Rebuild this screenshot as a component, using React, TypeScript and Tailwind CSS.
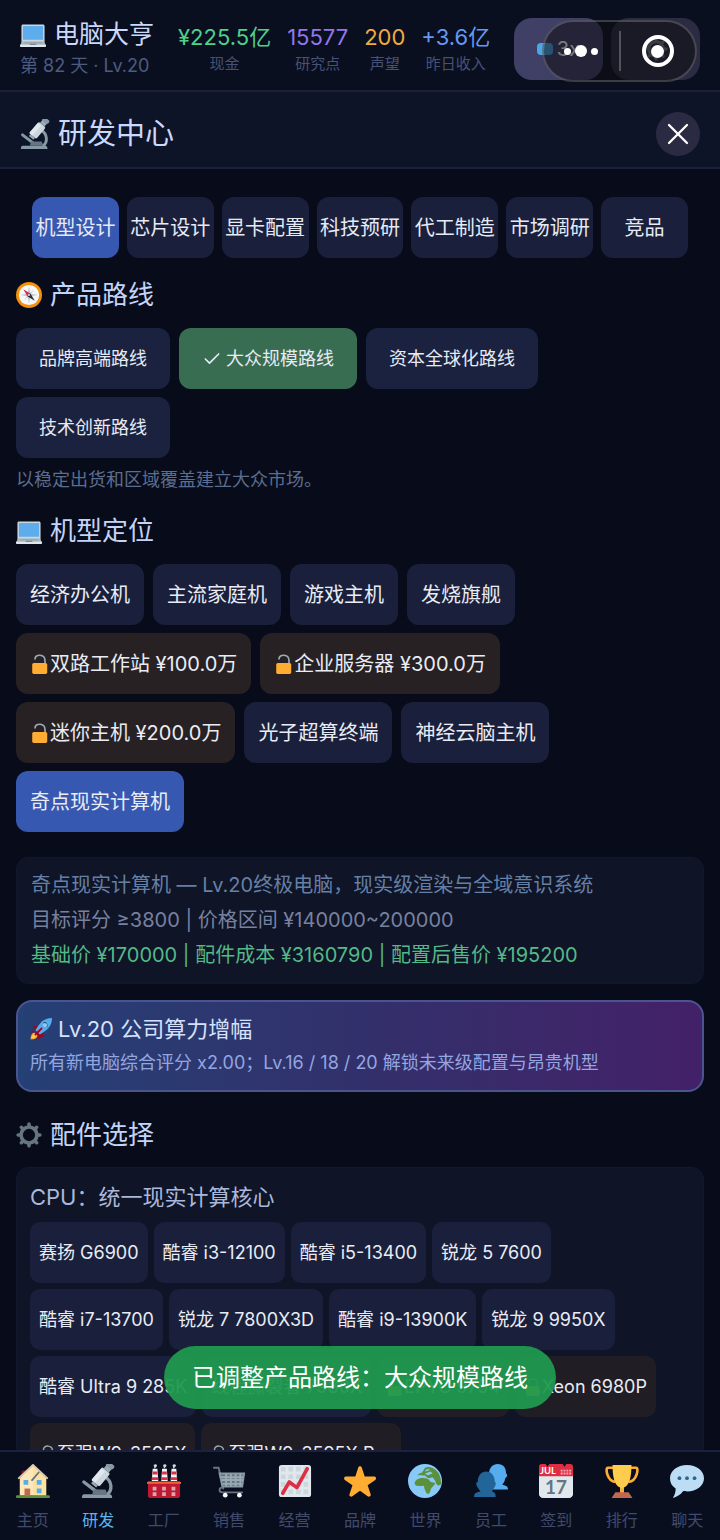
import type { ReactNode } from 'react';
import clsx from 'clsx';
import { Check, X } from 'lucide-react';

function Emoji({ className, children }: { className: string; children: ReactNode }) {
  return (
    <svg viewBox="0 0 36 36" className={clsx('shrink-0', className)} aria-hidden="true">
      {children}
    </svg>
  );
}

const laptop = (
  <>
    <path fill="#CCD6DD" d="M34 29c0 1-1 2-2 2H4c-1 0-2-1-2-2V7c0-1 1-2 2-2h28c1 0 2 1 2 2z" />
    <path fill="#5DADEC" d="M4 7h28v19H4z" />
    <path fill="#AEBBC1" d="M3 28h30l3 6H0z" />
    <path fill="#9AAAB4" d="M6 29h24l1 2H5z" />
    <path fill="#E1E8ED" d="M0 33h36v1.500c0 .8-.7 1.500-1.500 1.500h-33C.7 36 0 35.300 0 34.500z" />
    <path fill="#657786" d="M14 31.500h8l1 1.500H13z" />
  </>
);

const microscope = (
  <>
    <path d="M25 13c8 5 9 15 2 20" fill="none" stroke="#8899A6" strokeWidth="3.500" />
    <path fill="#8899A6" d="M3 32h27c2 0 3 1 3 4H1c0-3 1-4 2-4z" />
    <path stroke="#8899A6" strokeWidth="3.500" strokeLinecap="round" d="m3 19 13 10" />
    <path fill="#66757F" d="M13 27h13l2 5H12z" />
    <g transform="rotate(40 20 14)">
      <rect x="15" y="4" width="11" height="18" rx="2" fill="#CCD6DD" />
      <path fill="#E1E8ED" d="M15 6h5v16h-5z" />
      <path fill="#99AAB5" d="M17-1h7v5h-7zM17 22h7v3h-7z" />
      <rect x="16" y="-5" width="9" height="5" rx="2" fill="#8899A6" />
    </g>
  </>
);

const compass = (
  <>
    <circle cx="18" cy="18" r="18" fill="#F4900C" />
    <circle cx="18" cy="18" r="14" fill="#F5F8FA" />
    <path fill="#CCD6DD" d="m25 10-4.500 7.500L11 26l4.500-7.500z" />
    <path fill="#99AAB5" d="m18 6 1 9h-2zM18 30l1-9h-2zM6 18l9-1v2zM30 18l-9-1v2z" />
    <path fill="#DD2E44" d="m10 10 10 6-4 4z" />
    <path fill="#292F33" d="m26 26-10-6 4-4z" />
    <circle cx="18" cy="18" r="1.500" fill="#CCD6DD" />
  </>
);

const gear = (
  <g fill="none" stroke="#66757F">
    <circle cx="18" cy="18" r="11" strokeWidth="5" />
    <path
      strokeWidth="5"
      strokeLinecap="round"
      d="M18 5V3M18 31v2M5 18H3M31 18h2M8.800 8.800 7.400 7.400M27.200 27.200l1.400 1.400M8.800 27.200l-1.400 1.400M27.200 8.800l1.400-1.400"
    />
  </g>
);

const rocket = (
  <>
    <path fill="#A0041E" d="M8 16 1 24l9-1zM20 28l-7 7-1-9zM7 13h10L8 24 4 20zM23 19v10l-7 4-4-5z" />
    <path fill="#FFAC33" d="M1 35C1 29 3 24 7 24c4 1 5 3 5 5 0 4-5 6-11 6z" />
    <path fill="#FFCC4D" d="M3 33c0-3 1-6 4-6 2 0 2 1 2 2 0 3-3 4-6 4z" />
    <path fill="#55ACEE" d="M36 0C22 0 16 8 9 20l7 7C28 20 36 14 36 0z" />
    <path fill="#292F33" d="M21 8c4-2 9-1 7 8l-2-5z" />
    <circle cx="24.500" cy="11.500" r="3.500" fill="#8CCAF7" />
    <path stroke="#A0041E" strokeWidth="3" strokeLinecap="round" d="m9 27 10-10" />
  </>
);

const openLock = (
  <>
    <path d="M9 9c0-9.500 18-9.500 18 3v6" fill="none" stroke="#99AAB5" strokeWidth="3" strokeLinecap="round" />
    <rect x="4" y="16" width="27" height="20" rx="3" fill="#FFAC33" />
  </>
);

const house = (
  <>
    <path fill="#5C913B" d="M1 33h34c1 0 1.500 3 0 3H1c-1.500 0-1.500-3 0-3z" />
    <path fill="#A0041E" d="M6 7h5v9H6z" />
    <path fill="#FFE8B6" d="M18 1 4 15v18h28V15z" />
    <path fill="#FFD983" d="M18 1v32h14V15z" opacity=".45" />
    <path fill="none" stroke="#DAC8B1" strokeWidth="2" strokeLinecap="round" d="M3 15 18 1l15 14" />
    <path stroke="#66757F" strokeWidth="2" strokeLinecap="round" d="m17 17 7-8" />
    <path fill="#55ACEE" d="M8 17h5v5H8zM22 17h5v5h-5zM22 26h5v5h-5z" />
    <path fill="#C1694F" d="M9 26h6v8H9z" />
  </>
);

const factory = (
  <>
    <path fill="#F5F8FA" d="m6 5 5 0 1 14H5zM16 5h5l1 14h-7zM26 5h5l1 14h-7z" />
    <path fill="#DD2E44" d="M6 8h5v3H6zM5 14h7v3H5zM16 8h5v3h-5zM15 14h7v3h-7zM26 8h5v3h-5zM25 14h7v3h-7z" />
    <path fill="#CCD6DD" d="M7 1c2-2 5 0 3 2L8 5zM17 1c2-2 5 0 3 2l-2 2zM27 1c2-2 5 0 3 2l-2 2z" />
    <path fill="#BE1931" d="M1 18h34v16c0 1-1 2-2 2H3c-1 0-2-1-2-2z" />
    <path fill="#F4623A" d="M0 19h36v2H0z" />
    <path fill="#DDA5AE" d="M6 24h4v4H6zM16 24h4v4h-4zM26 24h4v4h-4zM6 30h4v4H6zM16 30h4v4h-4zM26 30h4v4h-4z" />
  </>
);

const cart = (
  <g fill="none" stroke="#99AAB5" strokeWidth="2" strokeLinecap="round">
    <path stroke="#66757F" d="M2 4h5l5 22" />
    <path fill="#66757F" stroke="#8899A6" d="M8 10h26l-2 14H11z" />
    <path d="M10 14h22M11 17h21M12 21h19M15 11v12M20 11v12M25 11v12M30 11v12" />
    <path stroke="#66757F" d="M11 25c-4 0-4 5 0 5h21" />
    <g fill="#F5F8FA" stroke="none">
      <circle cx="14" cy="33" r="2.500" />
      <circle cx="29" cy="33" r="2.500" />
    </g>
  </g>
);

const chart = (
  <>
    <rect x="1" y="1" width="34" height="34" rx="3" fill="#E1E8ED" />
    <g fill="#CCD6DD">
      <path d="M3 3h5v5H3zM11 3h5v5h-5zM19 3h5v5h-5zM27 3h5v5h-5zM3 11h5v5H3zM11 11h5v5h-5zM19 11h5v5h-5zM27 11h5v5h-5z" />
      <path d="M3 19h5v5H3zM11 19h5v5h-5zM19 19h5v5h-5zM27 19h5v5h-5zM3 27h5v5H3zM11 27h5v5h-5zM19 27h5v5h-5zM27 27h5v5h-5z" />
    </g>
    <path fill="none" stroke="#DD2E44" strokeWidth="3.800" strokeLinecap="round" strokeLinejoin="round" d="m5 31 7-12 8 6L31 5" />
  </>
);

const star = (
  <path
    fill="#FFAC33"
    d="M27.287 34.627c-.404 0-.806-.124-1.152-.371L18 28.422l-8.135 5.834c-.343.247-.745.371-1.147.371-.405 0-.81-.126-1.156-.379-.686-.499-.968-1.386-.708-2.192l3.179-9.535-8.062-5.681c-.683-.501-.962-1.388-.697-2.195.265-.807 1.020-1.355 1.867-1.360l9.947-.018 3.042-9.549c.27-.803 1.024-1.345 1.870-1.345s1.600.542 1.870 1.345l3.115 9.549 10.006.018c.848.005 1.603.553 1.867 1.360.265.807-.014 1.694-.697 2.195l-8.062 5.681 3.179 9.535c.26.806-.022 1.693-.708 2.192-.348.253-.753.379-1.158.379z"
  />
);

const globe = (
  <>
    <circle cx="18" cy="18" r="18" fill="#88C9F9" />
    <g fill="#5C913B">
      <path d="M7 20c1-4 6-6 11-5 3 0 5 2 6 4l5 1c-1 3-4 4-5 7-1 5-3 6-5 3-1-3-2-4-2-7-6 1-10 0-10-3z" />
      <path d="M10 12c1-2 3-2 5-3l3-5c4-2 9 0 12 3 4 4 5 9 5 14-2 3-5 2-6-3l-3-4-4 1c-2 0-3-3-5-3-2 1-3-1-5 0z" />
    </g>
    <path fill="#88C9F9" d="m19 6 4-1-1 2-4 1zM18 10l6-2 2 2-5 2z" />
  </>
);

const people = (
  <>
    <path fill="#55ACEE" d="M17 27c0-3 2-4 5-5-4-3-6-7-6-12 0-6 4-10 9-10 6 0 9 4 9 10 2 1 1 4-1 5 0 3-2 5-3 7 3 1 6 1 6 5z" />
    <path fill="#226699" d="M0 35c0-5 3-5 7-6-2-2-3-4-4-6-1-2-1-4 1-4 0-7 4-11 9-11s9 4 9 11c2 1 1 3 0 5-1 2-2 3-3 5 3 1 4 2 4 6z" />
  </>
);

const calendar = (
  <>
    <path fill="#E1E8ED" d="M0 11h36v21c0 2-2 4-4 4H4c-2 0-4-2-4-4z" />
    <path fill="#DD2E44" d="M3 0h4l2 3 2-3h14l2 3 2-3h4c2 0 3 1 3 3v10H0V3c0-2 1-3 3-3z" />
    <path fill="#F4ABBA" d="M23 6h2v2h-2zM26 6h2v2h-2zM29 6h2v2h-2zM32 6h2v2h-2zM23 9h2v2h-2zM26 9h2v2h-2zM29 9h2v2h-2zM32 9h2v2h-2z" />
    <text x="1" y="11" fontSize="10" fontWeight="700" fill="#fff" fontFamily="Lato, sans-serif">
      JUL
    </text>
    <text x="18" y="32" fontSize="20" fontWeight="700" textAnchor="middle" fill="#66757F" fontFamily="Lato, sans-serif">
      17
    </text>
  </>
);

const trophy = (
  <>
    <path fill="none" stroke="#FFAC33" strokeWidth="2.800" d="M10 4H3c-3 0-1 14 8 15M26 4h7c3 0 1 14-8 15" />
    <path fill="#FFCC4D" d="M8 1h20c0 13-2 21-8 24v6h-4v-6C10 22 8 14 8 1z" />
    <path fill="#FFAC33" d="M16 26h4v5h-4z" />
    <path fill="#C1694F" d="M11 30h14l4 6H7z" />
  </>
);

const bubble = (
  <>
    <path fill="#BDDDF4" d="M18 1c10 0 18 6 18 14s-8 14-18 14c-1 0-3 0-4-.3C11 33 7 35 3 36c2-3 3-6 3-10-4-3-6-6-6-11C0 7 8 1 18 1z" />
    <g fill="#2A6797">
      <circle cx="10" cy="15" r="2" />
      <circle cx="18" cy="15" r="2" />
      <circle cx="26" cy="15" r="2" />
    </g>
  </>
);

const stats = [
  { value: '¥225.5亿', label: '现金', color: 'text-[#4fd08b]' },
  { value: '15577', label: '研究点', color: 'text-[#9277ea]' },
  { value: '200', label: '声望', color: 'text-[#f0ab3f]' },
  { value: '+3.6亿', label: '昨日收入', color: 'text-[#6599f2]' },
];

const tabs = ['机型设计', '芯片设计', '显卡配置', '科技预研', '代工制造', '市场调研', '竞品'];

const routes = ['品牌高端路线', '大众规模路线', '资本全球化路线', '技术创新路线'];

const models = [
  { name: '经济办公机' },
  { name: '主流家庭机' },
  { name: '游戏主机' },
  { name: '发烧旗舰' },
  { name: '双路工作站 ¥100.0万', locked: true },
  { name: '企业服务器 ¥300.0万', locked: true },
  { name: '迷你主机 ¥200.0万', locked: true },
  { name: '光子超算终端' },
  { name: '神经云脑主机' },
  { name: '奇点现实计算机', active: true },
];

const cpus = [
  { name: '赛扬 G6900' },
  { name: '酷睿 i3-12100' },
  { name: '酷睿 i5-13400' },
  { name: '锐龙 5 7600' },
  { name: '酷睿 i7-13700' },
  { name: '锐龙 7 7800X3D' },
  { name: '酷睿 i9-13900K' },
  { name: '锐龙 9 9950X' },
  { name: '酷睿 Ultra 9 285K' },
  { name: '线程撕裂者 7980X' },
  { name: 'EPYC 9754', locked: true },
  { name: 'Xeon 6980P', locked: true },
  { name: '至强W9-3595X', locked: true },
  { name: '至强W9-3595X Pro', locked: true },
];

const navItems = [
  { label: '主页', icon: house },
  { label: '研发', icon: microscope, active: true },
  { label: '工厂', icon: factory },
  { label: '销售', icon: cart },
  { label: '经营', icon: chart },
  { label: '品牌', icon: star },
  { label: '世界', icon: globe },
  { label: '员工', icon: people },
  { label: '签到', icon: calendar },
  { label: '排行', icon: trophy },
  { label: '聊天', icon: bubble },
];

function SectionTitle({ icon, children }: { icon: ReactNode; children: ReactNode }) {
  return (
    <h2 className="flex items-center gap-2 text-[26px] leading-9 text-[#c3d4fb]">
      <Emoji className="size-[26px]">{icon}</Emoji>
      {children}
    </h2>
  );
}

function TopBar() {
  return (
    <header className="flex h-[92px] shrink-0 items-center justify-between border-b-2 border-[#1b2036] bg-[#0a0f20] px-5 pt-2">
      <div className="flex items-center gap-6 whitespace-nowrap">
        <div>
          <h1 className="flex items-center gap-2 text-[25px] leading-[34px] text-[#cbd8fa]">
            <Emoji className="size-[26px]">{laptop}</Emoji>
            电脑大亨
          </h1>
          <p className="text-[18px] leading-[30px] text-[#4e5b80]">第 82 天 · Lv.20</p>
        </div>
        <dl className="flex gap-4 text-center">
          {stats.map((s) => (
            <div key={s.label} className="flex flex-col-reverse">
              <dt className="text-[15px] leading-6 text-[#465275]">{s.label}</dt>
              <dd className={clsx('text-[22px] leading-[30px]', s.color)}>{s.value}</dd>
            </div>
          ))}
        </dl>
      </div>

      <div className="relative flex gap-2">
        <button className="flex h-[62px] w-[89px] items-center justify-center gap-1 rounded-[18px] bg-[#403f66] text-[20px] text-white">
          <span className="h-3 w-4 rounded-sm bg-[#4ba7e4]" />
          3x
        </button>
        <button aria-label="设置" className="flex h-[62px] w-[89px] items-center justify-center rounded-[18px] bg-[#2b2b43]">
          <Emoji className="size-6">{gear}</Emoji>
        </button>
        {/* host app capsule floats over the game's own buttons */}
        <div className="absolute top-[2px] right-[3px] flex h-[62px] w-[155px] items-center rounded-full border-2 border-white/20 bg-[#0c0c10]/55">
          <button aria-label="更多" className="flex flex-1 items-center justify-center gap-1">
            <span className="size-[7px] rounded-full bg-white" />
            <span className="size-3 rounded-full bg-white" />
            <span className="size-[7px] rounded-full bg-white" />
          </button>
          <span className="h-10 w-[2px] bg-white/25" />
          <button aria-label="关闭小程序" className="flex flex-1 items-center justify-center">
            <span className="flex size-8 items-center justify-center rounded-full border-4 border-white">
              <span className="size-[13px] rounded-full bg-white" />
            </span>
          </button>
        </div>
      </div>
    </header>
  );
}

function BottomNav() {
  return (
    <nav className="grid h-[90px] shrink-0 grid-cols-11 border-t-2 border-[#1a2240] bg-[#090e1f] pt-3">
      {navItems.map((item) => (
        <button
          key={item.label}
          className={clsx(
            'flex flex-col items-center gap-2 text-[16px] leading-7',
            item.active ? 'text-[#5cb6ee]' : 'text-[#414a6b]',
          )}
        >
          <Emoji className="size-[34px]">{item.icon}</Emoji>
          {item.label}
        </button>
      ))}
    </nav>
  );
}

export default function App() {
  return (
    <div className="relative flex h-screen flex-col overflow-hidden bg-[#080c1a] font-['Inter','Noto_Sans_CJK_SC',sans-serif] font-normal">
      <TopBar />

      <div className="flex h-[77px] shrink-0 items-center justify-between border-b-2 border-[#1b2139] bg-[#0e1427] px-5 pt-2">
        <h2 className="flex items-center gap-2 text-[29px] leading-10 text-[#c9d8fb]">
          <Emoji className="size-[30px]">{microscope}</Emoji>
          研发中心
        </h2>
        <button aria-label="关闭" className="flex size-11 items-center justify-center rounded-full bg-[#2a2b42] text-white">
          <X className="size-9" strokeWidth={1.5} />
        </button>
      </div>

      <main className="min-h-0 flex-1 overflow-hidden px-4 pt-7">
        <div className="grid grid-cols-7 gap-2 px-4">
          {tabs.map((tab, i) => (
            <button
              key={tab}
              className={clsx(
                'h-[61px] rounded-xl text-[20px] whitespace-nowrap text-[#e6eaf5]',
                i === 0 ? 'bg-[#3658b0]' : 'bg-[#1a203b]',
              )}
            >
              {tab}
            </button>
          ))}
        </div>

        {/* Product route */}
        <section className="mt-[19px]">
          <SectionTitle icon={compass}>产品路线</SectionTitle>
          <div className="mt-[15px] flex flex-wrap gap-x-[9px] gap-y-2 pr-4">
            {routes.map((route) => {
              const selected = route === '大众规模路线';
              return (
                <button
                  key={route}
                  className={clsx(
                    'flex h-[61px] items-center gap-1 rounded-xl px-[23px] text-[18px] text-[#e6eaf5]',
                    selected ? 'bg-[#386d52]' : 'bg-[#1a223f]',
                  )}
                >
                  {selected && <Check className="size-5" strokeWidth={2} />}
                  {route}
                </button>
              );
            })}
          </div>
          <p className="mt-2 text-[18px] leading-7 text-[#5c6d90]">以稳定出货和区域覆盖建立大众市场。</p>
        </section>

        {/* Model positioning */}
        <section className="mt-[19px]">
          <SectionTitle icon={laptop}>机型定位</SectionTitle>
          <div className="mt-[15px] flex flex-wrap gap-x-[9px] gap-y-2">
            {models.map((m) => (
              <button
                key={m.name}
                className={clsx(
                  'flex h-[61px] items-center rounded-xl px-[14px] text-[20px] text-[#e9ecf5]',
                  m.active ? 'bg-[#3658b0]' : m.locked ? 'bg-[#272124]' : 'bg-[#1a203b]',
                )}
              >
                {m.locked && <Emoji className="size-5">{openLock}</Emoji>}
                {m.name}
              </button>
            ))}
          </div>
        </section>

        <div className="mt-[25px] rounded-xl border border-[#11172b] bg-[#0f1427] px-[14px] py-[10px] text-[20px] leading-[35px]">
          <p className="text-[#6580a6]">奇点现实计算机 — Lv.20终极电脑，现实级渲染与全域意识系统</p>
          <p className="text-[#78819f]">目标评分 ≥3800 | 价格区间 ¥140000~200000</p>
          <p className="text-[#54b888]">基础价 ¥170000 | 配件成本 ¥3160790 | 配置后售价 ¥195200</p>
        </div>

        <div className="mt-4 rounded-2xl border-2 border-[#4a5590] bg-linear-to-r from-[#244075] via-[#32306c] to-[#432068] px-3 py-[10px]">
          <h3 className="flex items-center gap-[6px] text-[22px] leading-[34px] text-[#d5e2fd]">
            <Emoji className="size-[22px]">{rocket}</Emoji>
            Lv.20 公司算力增幅
          </h3>
          <p className="text-[18px] leading-[34px] text-[#93a6e0]">
            所有新电脑综合评分 x2.00；Lv.16 / 18 / 20 解锁未来级配置与昂贵机型
          </p>
        </div>

        {/* Components */}
        <section className="mt-[25px]">
          <SectionTitle icon={gear}>配件选择</SectionTitle>
          <div className="mt-[14px] rounded-xl border border-[#12182d] bg-[#0f1427] px-[13px] py-3">
            <h3 className="text-[22px] leading-[34px] text-[#aab8db]">CPU：统一现实计算核心</h3>
            <div className="mt-2 flex flex-wrap gap-[6px] pr-4">
              {cpus.map((cpu) => (
                <button
                  key={cpu.name}
                  className={clsx(
                    'flex h-[61px] items-center rounded-[10px] px-[9px] text-[18px] text-[#e9ecf5]',
                    cpu.locked ? 'bg-[#211d25]' : 'bg-[#1a203b]',
                  )}
                >
                  {cpu.locked && <Emoji className="size-[18px]">{openLock}</Emoji>}
                  {cpu.name}
                </button>
              ))}
            </div>
          </div>
        </section>
      </main>

      <div
        role="status"
        className="absolute bottom-[131px] left-1/2 -translate-x-1/2 rounded-full bg-[#20994f]/95 px-7 py-3 text-[24px] leading-[39px] whitespace-nowrap text-white"
      >
        已调整产品路线：大众规模路线
      </div>

      <BottomNav />
    </div>
  );
}
